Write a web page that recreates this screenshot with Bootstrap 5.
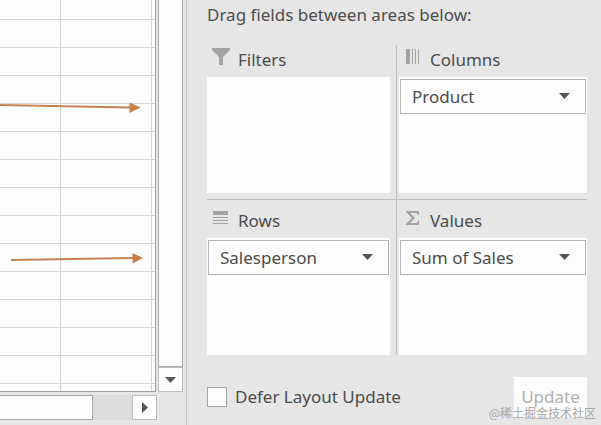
<!DOCTYPE html>
<html lang="en">
<head>
<meta charset="utf-8">
<meta name="viewport" content="width=device-width, initial-scale=1">
<title>PivotTable Fields</title>
<link href="https://cdn.jsdelivr.net/npm/bootstrap@5.3.0/dist/css/bootstrap.min.css" rel="stylesheet">
<style>
body { background: #e6e6e6; color: #4c4c4c; font: 17px/24px "Noto Sans", "Open Sans", sans-serif; }
.workbook { width: 187px; border-right: 1px solid #c3c3c3; }
.sheet { background: #fdfdfd; border-right: 1px solid #9c9fa0; border-bottom: 1px solid #9c9fa0; }
.cells { border-collapse: separate; border-spacing: 0; table-layout: fixed; }
.cells td { height: 28px; padding: 0; border: solid #d2d4d6; border-width: 0 1px 1px 0; }
.cells tr:first-child td { height: 20px; }
.cells tr:last-child td { height: 7px; border-bottom: 0; }
.cells td:last-child { border-right: 0; }
.col-a { width: 61px; }
.col-b { width: 91px; }
.vbar { width: 25px; margin: 0 3px 0 2px; }
.thumb, .step { background: #fdfdfd; border: 1px solid #a9abac; }
.vbar .thumb { border-top: 0; }
.hbar .thumb { width: 93px; border-left: 0; }
.step { width: 25px; height: 25px; border-color: #bdbdbd; }
.hbar { height: 25px; margin: 3px 29px 5px 0; background: repeating-conic-gradient(#d3d5d3 0 25%, #e2e3e2 0 50%) 0 0 / 2px 2px; }
.fields { padding: 3px 14px 8px 20px; }
.areas { margin-top: 18px; }
.area { border: 0 solid #bdbdbd; }
.area-left { border-right-width: 1px; padding-right: 6px; }
.area-right { padding-left: 2px; }
.area-top { border-bottom-width: 1px; padding-bottom: 6px; }
.area-head { height: 32px; padding: 3px 0 5px 4px; gap: 7px; }
.area-low .area-head { height: 38px; padding: 9px 0 5px 4px; }
.area-head svg { width: 20px; height: 20px; }
.drop-zone { height: 117px; background: #fdfdfd; padding: 2px 1px; }
.area-top .drop-zone { height: 116px; }
.field { height: 35px; padding: 0 36px 0 11px; font-size: 17px; line-height: 24px; color: #4c4c4c; border: 1px solid #b5b5b5;
  background: #fdfdfd url("data:image/svg+xml,%3Csvg xmlns='http://www.w3.org/2000/svg' viewBox='0 0 11 6'%3E%3Cpath d='M0 0h11L5.5 6z' fill='%23555'/%3E%3C/svg%3E") no-repeat right 15px top 13px / 11px 6px; }
.defer { width: 20px; height: 20px; border: 1px solid #a3a3a3; background: #fdfdfd; }
.update { height: 40px; width: 73px; font-size: 17px; line-height: 24px; }
.btn.update:disabled { color: #b0b0b0; background: #fdfdfd; opacity: 1; }
.credit { right: 5px; bottom: 2px; font: 12px/20px "Noto Sans CJK SC", sans-serif; color: #a6a6a6; }
</style>
<script src="https://cdn.jsdelivr.net/npm/bootstrap@5.3.0/dist/js/bootstrap.bundle.min.js" defer></script>
</head>
<body class="d-flex min-vh-100 position-relative">
<section class="workbook flex-shrink-0 d-flex flex-column" aria-label="Worksheet">
  <div class="d-flex flex-grow-1">
    <div class="sheet position-relative flex-grow-1">
      <table class="cells w-100" aria-label="Cells">
        <colgroup><col class="col-a"><col class="col-b"><col></colgroup>
        <tbody>
          <tr><td></td><td></td><td></td></tr>
          <tr><td></td><td></td><td></td></tr>
          <tr><td></td><td></td><td></td></tr>
          <tr><td></td><td></td><td></td></tr>
          <tr><td></td><td></td><td></td></tr>
          <tr><td></td><td></td><td></td></tr>
          <tr><td></td><td></td><td></td></tr>
          <tr><td></td><td></td><td></td></tr>
          <tr><td></td><td></td><td></td></tr>
          <tr><td></td><td></td><td></td></tr>
          <tr><td></td><td></td><td></td></tr>
          <tr><td></td><td></td><td></td></tr>
          <tr><td></td><td></td><td></td></tr>
          <tr><td></td><td></td><td></td></tr>
          <tr><td></td><td></td><td></td></tr>
        </tbody>
      </table>
      <svg class="position-absolute top-0 start-0" width="155" height="390" fill="#cc8048" stroke="#c68251" aria-hidden="true">
        <path d="M0 105L130 107.500M11 260L133 258" stroke-width="2"/>
        <path d="M129.500 102.500v10.500l11-5.500zM132.500 253v10.500l10.500-5.500z" stroke="none"/>
      </svg>
    </div>
    <div class="vbar d-flex flex-column">
      <div class="thumb flex-grow-1"></div>
      <button type="button" class="step p-0 d-flex align-items-center justify-content-center" aria-label="Scroll down"><svg width="11" height="6" fill="#555" aria-hidden="true"><path d="M0 0h11L5.500 6z"/></svg></button>
    </div>
  </div>
  <div class="hbar d-flex justify-content-between">
    <div class="thumb"></div>
    <button type="button" class="step p-0 d-flex align-items-center justify-content-center" aria-label="Scroll right"><svg width="6" height="11" fill="#555" aria-hidden="true"><path d="M0 0v11L6 5.500z"/></svg></button>
  </div>
</section>
<main class="fields flex-grow-1 d-flex flex-column">
  <p class="mb-0">Drag fields between areas below:</p>
  <div class="areas row g-0">
    <section class="col-6 area area-left area-top">
      <div class="area-head d-flex align-items-start">
        <svg fill="#a3a3a3" aria-hidden="true"><path d="M1 0h18v2l-7 7v8H8V9L1 2z"/></svg>
        <span id="filters">Filters</span>
      </div>
      <div class="drop-zone" role="group" aria-labelledby="filters"></div>
    </section>
    <section class="col-6 area area-right area-top">
      <div class="area-head d-flex align-items-start">
        <svg fill="#a3a3a3" aria-hidden="true"><path d="M3 1h4v15H3zM9 1h1v15H9zM12 1h1v15h-1zM15 1h1v15h-1z"/></svg>
        <label for="columns">Columns</label>
      </div>
      <div class="drop-zone"><select id="columns" class="form-select field rounded-0"><option>Product</option></select></div>
    </section>
    <section class="col-6 area area-left area-low">
      <div class="area-head d-flex align-items-start">
        <svg fill="#a3a3a3" aria-hidden="true"><path d="M2 2h15v4H2zM2 8h15v1H2zM2 11h15v1H2zM2 14h15v1H2z"/></svg>
        <label for="rows">Rows</label>
      </div>
      <div class="drop-zone"><select id="rows" class="form-select field rounded-0"><option>Salesperson</option></select></div>
    </section>
    <section class="col-6 area area-right area-low">
      <div class="area-head d-flex align-items-start">
        <svg fill="#a3a3a3" aria-hidden="true"><path d="M3 2h13v4h-1q0-2-2-2H7l5 5-5 5h6q2 0 2-3h1v5H3v-1l6-6-6-6z"/></svg>
        <label for="values">Values</label>
      </div>
      <div class="drop-zone"><select id="values" class="form-select field rounded-0"><option>Sum of Sales</option></select></div>
    </section>
  </div>
  <div class="d-flex align-items-center justify-content-between mt-auto">
    <div class="d-flex align-items-center gap-2">
      <input class="form-check-input defer rounded-0 m-0" type="checkbox" id="defer">
      <label for="defer">Defer Layout Update</label>
    </div>
    <button type="button" class="btn update rounded-0 border-0 p-0" disabled>Update</button>
  </div>
</main>
<div class="credit position-absolute">@稀土掘金技术社区</div>
</body>
</html>
